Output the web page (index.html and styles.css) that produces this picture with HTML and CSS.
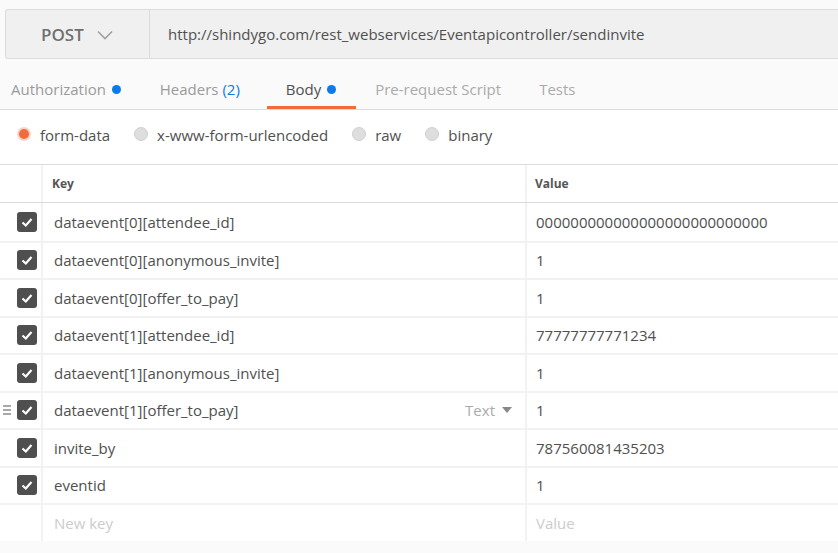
FILE: index.html
```html
<!DOCTYPE html>
<html>
<head>
<meta charset="utf-8">
<link rel="stylesheet" href="styles.css">
</head>
<body>
<div class="urlbar">
  <div class="method">
    <span class="method-name">POST</span>
    <svg class="chev" width="16" height="10" viewBox="0 0 16 10"><polyline points="1,1.5 8,8.5 15,1.5" fill="none" stroke="#a0a0a0" stroke-width="1.6"/></svg>
  </div>
  <div class="url">http://shindygo.com/rest_webservices/Eventapicontroller/sendinvite</div>
</div>

<div class="tabs">
  <div class="tab first">Authorization <span class="dot"></span></div>
  <div class="tab">Headers <span class="count">(2)</span></div>
  <div class="tab active">Body <span class="dot"></span></div>
  <div class="tab light">Pre-request Script</div>
  <div class="tab light">Tests</div>
</div>

<div class="radios">
  <label class="radio"><span class="circle on"></span>form-data</label>
  <label class="radio"><span class="circle"></span>x-www-form-urlencoded</label>
  <label class="radio"><span class="circle"></span>raw</label>
  <label class="radio"><span class="circle"></span>binary</label>
</div>

<div class="table">
  <div class="row head">
    <div class="c-check"></div>
    <div class="c-key">Key</div>
    <div class="c-val">Value</div>
  </div>
  <div class="row">
    <div class="c-check"><span class="cb"><svg viewBox="0 0 20 20"><polyline points="5.5,10.5 8.8,13.5 14.5,7" fill="none" stroke="#fff" stroke-width="2.2"/></svg></span></div>
    <div class="c-key">dataevent[0][attendee_id]</div>
    <div class="c-val">000000000000000000000000000</div>
  </div>
  <div class="row">
    <div class="c-check"><span class="cb"><svg viewBox="0 0 20 20"><polyline points="5.5,10.5 8.8,13.5 14.5,7" fill="none" stroke="#fff" stroke-width="2.2"/></svg></span></div>
    <div class="c-key">dataevent[0][anonymous_invite]</div>
    <div class="c-val">1</div>
  </div>
  <div class="row">
    <div class="c-check"><span class="cb"><svg viewBox="0 0 20 20"><polyline points="5.5,10.5 8.8,13.5 14.5,7" fill="none" stroke="#fff" stroke-width="2.2"/></svg></span></div>
    <div class="c-key">dataevent[0][offer_to_pay]</div>
    <div class="c-val">1</div>
  </div>
  <div class="row">
    <div class="c-check"><span class="cb"><svg viewBox="0 0 20 20"><polyline points="5.5,10.5 8.8,13.5 14.5,7" fill="none" stroke="#fff" stroke-width="2.2"/></svg></span></div>
    <div class="c-key">dataevent[1][attendee_id]</div>
    <div class="c-val">77777777771234</div>
  </div>
  <div class="row">
    <div class="c-check"><span class="cb"><svg viewBox="0 0 20 20"><polyline points="5.5,10.5 8.8,13.5 14.5,7" fill="none" stroke="#fff" stroke-width="2.2"/></svg></span></div>
    <div class="c-key">dataevent[1][anonymous_invite]</div>
    <div class="c-val">1</div>
  </div>
  <div class="row">
    <div class="c-check"><span class="handle"><i></i><i></i><i></i></span><span class="cb"><svg viewBox="0 0 20 20"><polyline points="5.5,10.5 8.8,13.5 14.5,7" fill="none" stroke="#fff" stroke-width="2.2"/></svg></span></div>
    <div class="c-key"><span>dataevent[1][offer_to_pay]</span><span class="type">Text <svg width="10" height="6" viewBox="0 0 10 6"><polygon points="0,0 10,0 5,6" fill="#888"/></svg></span></div>
    <div class="c-val">1</div>
  </div>
  <div class="row">
    <div class="c-check"><span class="cb"><svg viewBox="0 0 20 20"><polyline points="5.5,10.5 8.8,13.5 14.5,7" fill="none" stroke="#fff" stroke-width="2.2"/></svg></span></div>
    <div class="c-key">invite_by</div>
    <div class="c-val">787560081435203</div>
  </div>
  <div class="row">
    <div class="c-check"><span class="cb"><svg viewBox="0 0 20 20"><polyline points="5.5,10.5 8.8,13.5 14.5,7" fill="none" stroke="#fff" stroke-width="2.2"/></svg></span></div>
    <div class="c-key">eventid</div>
    <div class="c-val">1</div>
  </div>
  <div class="row last">
    <div class="c-check"></div>
    <div class="c-key ph">New key</div>
    <div class="c-val ph">Value</div>
  </div>
</div>
</body>
</html>
```

FILE: styles.css
```css
* { box-sizing: border-box; }
html, body { margin: 0; padding: 0; }
body {
  background: #fafafa;
  font-family: "Open Sans", "Liberation Sans", sans-serif;
  font-size: 15px;
  color: #505050;
  width: 838px;
  height: 553px;
  overflow: hidden;
}

.urlbar {
  margin: 9px 0 0 5px;
  height: 50px;
  display: flex;
  background: #f0f0f0;
  border: 1px solid #dcdcdc;
  border-right: none;
  border-radius: 3px 0 0 3px;
}
.method {
  width: 144px;
  flex: none;
  display: flex;
  align-items: center;
  padding-left: 35px;
  gap: 13px;
  border-right: 1px solid #dcdcdc;
}
.method-name {
  font-size: 17px;
  font-weight: 600;
  color: #707070;
}
.chev { margin-top: 1px; }
.url {
  display: flex;
  align-items: center;
  padding-left: 18px;
  color: #505050;
}

.tabs {
  height: 51px;
  display: flex;
  align-items: flex-end;
  border-bottom: 1px solid #dcdcdc;
}
.tab {
  padding: 3px 19px 0;
  height: 37px;
  line-height: 28px;
  color: #9a9a9a;
  border-bottom: 3px solid transparent;
  display: flex;
  align-items: flex-start;
  white-space: pre;
}
.tab.first { padding-left: 11px; padding-right: 20px; }
.tab.active { color: #505050; border-bottom-color: #f26b3a; padding-left: 19px; padding-right: 20px; margin-left: 8px; }
.tab.light { color: #aaaaaa; }
.dot {
  width: 9px;
  height: 9px;
  border-radius: 50%;
  background: #097bed;
  margin-top: 10px;
  margin-left: 2px;
}
.count { color: #097bed; }

.radios {
  height: 54px;
  background: #fff;
  display: flex;
  align-items: center;
  padding-left: 17px;
  padding-bottom: 4px;
  gap: 24px;
  color: #505050;
}
.radio {
  display: flex;
  align-items: center;
  gap: 9px;
}
.circle {
  width: 14px;
  height: 14px;
  border-radius: 50%;
  background: #dedede;
  border: 1px solid #cfcfcf;
  margin-top: -3px;
}
.circle.on {
  background: #f26b3a;
  border: 2px solid #f3d6cb;
}

.table {
  background: #fff;
  border-top: 1px solid #dcdcdc;
}
.row {
  display: grid;
  grid-template-columns: 41px 484px 1fr;
  height: 37.5px;
  border-top: 2px solid #f2f2f2;
}
.row.head {
  height: 38px;
  border-top: none;
  border-bottom: 1px solid #dcdcdc;
  font-size: 12px;
  font-weight: 700;
  color: #555;
}
.row.head + .row { border-top: none; }
.row > div { display: flex; align-items: center; }
.c-key {
  border-left: 2px solid #f2f2f2;
  padding-left: 11px;
  padding-right: 13px;
  justify-content: space-between;
}
.c-val {
  border-left: 2px solid #f2f2f2;
  padding-left: 9px;
}
.row.head .c-key { padding-left: 9px; }
.row.head .c-val { padding-left: 8px; }
.c-check {
  justify-content: flex-end;
  padding-right: 4px;
  gap: 6px;
}
.cb {
  width: 20px;
  height: 20px;
  border-radius: 3px;
  background: #4f4f4f;
  display: block;
}
.cb svg { width: 20px; height: 20px; display: block; }
.handle {
  display: flex;
  flex-direction: column;
  gap: 2px;
  width: 8px;
}
.handle i {
  display: block;
  height: 2px;
  background: #a8a8a8;
}
.type {
  color: #aaaaaa;
  display: flex;
  align-items: center;
  gap: 7px;
}
.ph { color: #cccccc; }
```
